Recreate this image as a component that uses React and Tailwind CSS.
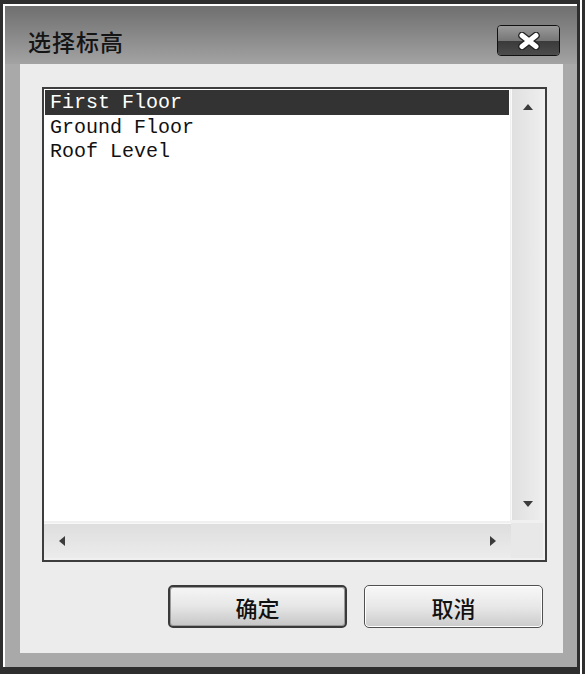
import React, { useState } from "react";

const levels = ["First Floor", "Ground Floor", "Roof Level"];

function Arrow({ dir }) {
  // small dark triangles of the scroll bars
  const pts = {
    up: "0,7 5,1 10,7",
    down: "0,1 5,7 10,1",
    left: "7,0 1,5 7,10",
    right: "1,0 7,5 1,10",
  }[dir];
  const vertical = dir === "up" || dir === "down";
  return (
    <svg width={vertical ? 10 : 8} height={vertical ? 8 : 10} viewBox={vertical ? "0 0 10 8" : "0 0 8 10"}>
      <polygon points={pts} fill="#3c3c3c" />
    </svg>
  );
}

export default function App() {
  const [selected, setSelected] = useState(0);

  return (
    <div className="flex w-[585px] h-[674px] bg-[#2e2e2e]" style={{ fontFamily: '"Noto Sans CJK SC", sans-serif' }}>
      {/* main window */}
      <div className="w-[580px] h-full border-l-[3px] border-t-[4px] border-r-[3px] border-b-[7px] border-[#2e2e2e]">
        <div className="h-full flex flex-col border-l-2 border-t-2 border-white bg-[#a9a9a9]">
          {/* title bar */}
          <div className="h-[58px] shrink-0 flex items-start justify-between bg-gradient-to-b from-[#6f6f6f] to-[#a3a3a3] pl-[23px] pr-[17px]">
            <div className="mt-[20px] text-[23px] leading-[30px] font-medium text-[#151515] tracking-[1px]">选择标高</div>
            <button className="mt-[19px] w-[63px] h-[31px] rounded-[4px] border border-[#111] overflow-hidden flex flex-col relative">
              <div className="h-1/2 w-full bg-gradient-to-b from-[#9a9a9a] to-[#767676]" />
              <div className="h-1/2 w-full bg-gradient-to-b from-[#3a3a3a] to-[#4c4c4c]" />
              <div className="absolute inset-0 flex items-center justify-center">
                <svg width="26" height="18" viewBox="0 0 26 18">
                  <path d="M6 3.5 L20 14.5 M20 3.5 L6 14.5" stroke="#222" strokeWidth="7.5" strokeLinecap="round" />
                  <path d="M6 3.5 L20 14.5 M20 3.5 L6 14.5" stroke="#fff" strokeWidth="5" strokeLinecap="round" />
                </svg>
              </div>
            </button>
          </div>

          {/* body */}
          <div className="flex-1 flex pl-[15px] pr-[14px] pb-[14px]">
            <div className="flex-1 flex flex-col bg-[#ececec] pt-[23px] pl-[22px] pr-[16px]">
              {/* list box */}
              <div className="h-[475px] border-2 border-[#3d3d3d] bg-[#f0f0f0] grid grid-cols-[1fr_34px] grid-rows-[1fr_37px]">
                <div className="bg-white pt-[1px] pl-[1px] pr-[1px] mr-[1px] mb-[2px]">
                  {levels.map((name, i) => (
                    <div
                      key={name}
                      onClick={() => setSelected(i)}
                      className={`h-[24.5px] pl-[5px] pt-[1px] text-[20px] leading-[24px] whitespace-pre ${
                        selected === i ? "bg-[#333333] text-white" : "text-[#111]"
                      }`}
                      style={{ fontFamily: '"Liberation Mono", monospace' }}
                    >
                      {name}
                    </div>
                  ))}
                </div>
                {/* vertical scroll bar */}
                <div className="flex flex-col items-center justify-between bg-gradient-to-r from-[#e0e0e0] to-[#eeeeee] border-l border-[#fafafa] mr-[2px] mb-[3px] pt-[14px] pb-[12px]">
                  <Arrow dir="up" />
                  <Arrow dir="down" />
                </div>
                {/* horizontal scroll bar */}
                <div className="flex items-center justify-between bg-gradient-to-b from-[#dedede] to-[#ececec] border-t border-[#f8f8f8] mb-[2px] pl-[14px] pr-[14px]">
                  <Arrow dir="left" />
                  <Arrow dir="right" />
                </div>
                <div className="bg-[#e8e8e8] mr-[2px] mb-[2px]" />
              </div>

              {/* buttons */}
              <div className="flex justify-end gap-[17px] mt-[23px] mr-[4px]">
                <button className="w-[179px] h-[43px] rounded-[5px] border-2 border-[#3a3a3a] bg-gradient-to-b from-[#f6f6f6] via-[#e6e6e6] to-[#c6c6c6] text-[22px] leading-none font-medium text-[#111] shadow-[inset_0_0_0_1px_#9a9a9a]">
                  确定
                </button>
                <button className="w-[179px] h-[43px] rounded-[5px] border-[1.5px] border-[#505050] bg-gradient-to-b from-[#f8f8f8] via-[#e8e8e8] to-[#cbcbcb] text-[22px] leading-none font-medium text-[#111] shadow-[inset_0_0_0_1px_#ffffff]">
                  取消
                </button>
              </div>
            </div>
          </div>
        </div>
      </div>
      {/* edge of the window behind */}
      <div className="w-[5px] h-full border-l-2 border-white bg-[#2e2e2e]" />
    </div>
  );
}
